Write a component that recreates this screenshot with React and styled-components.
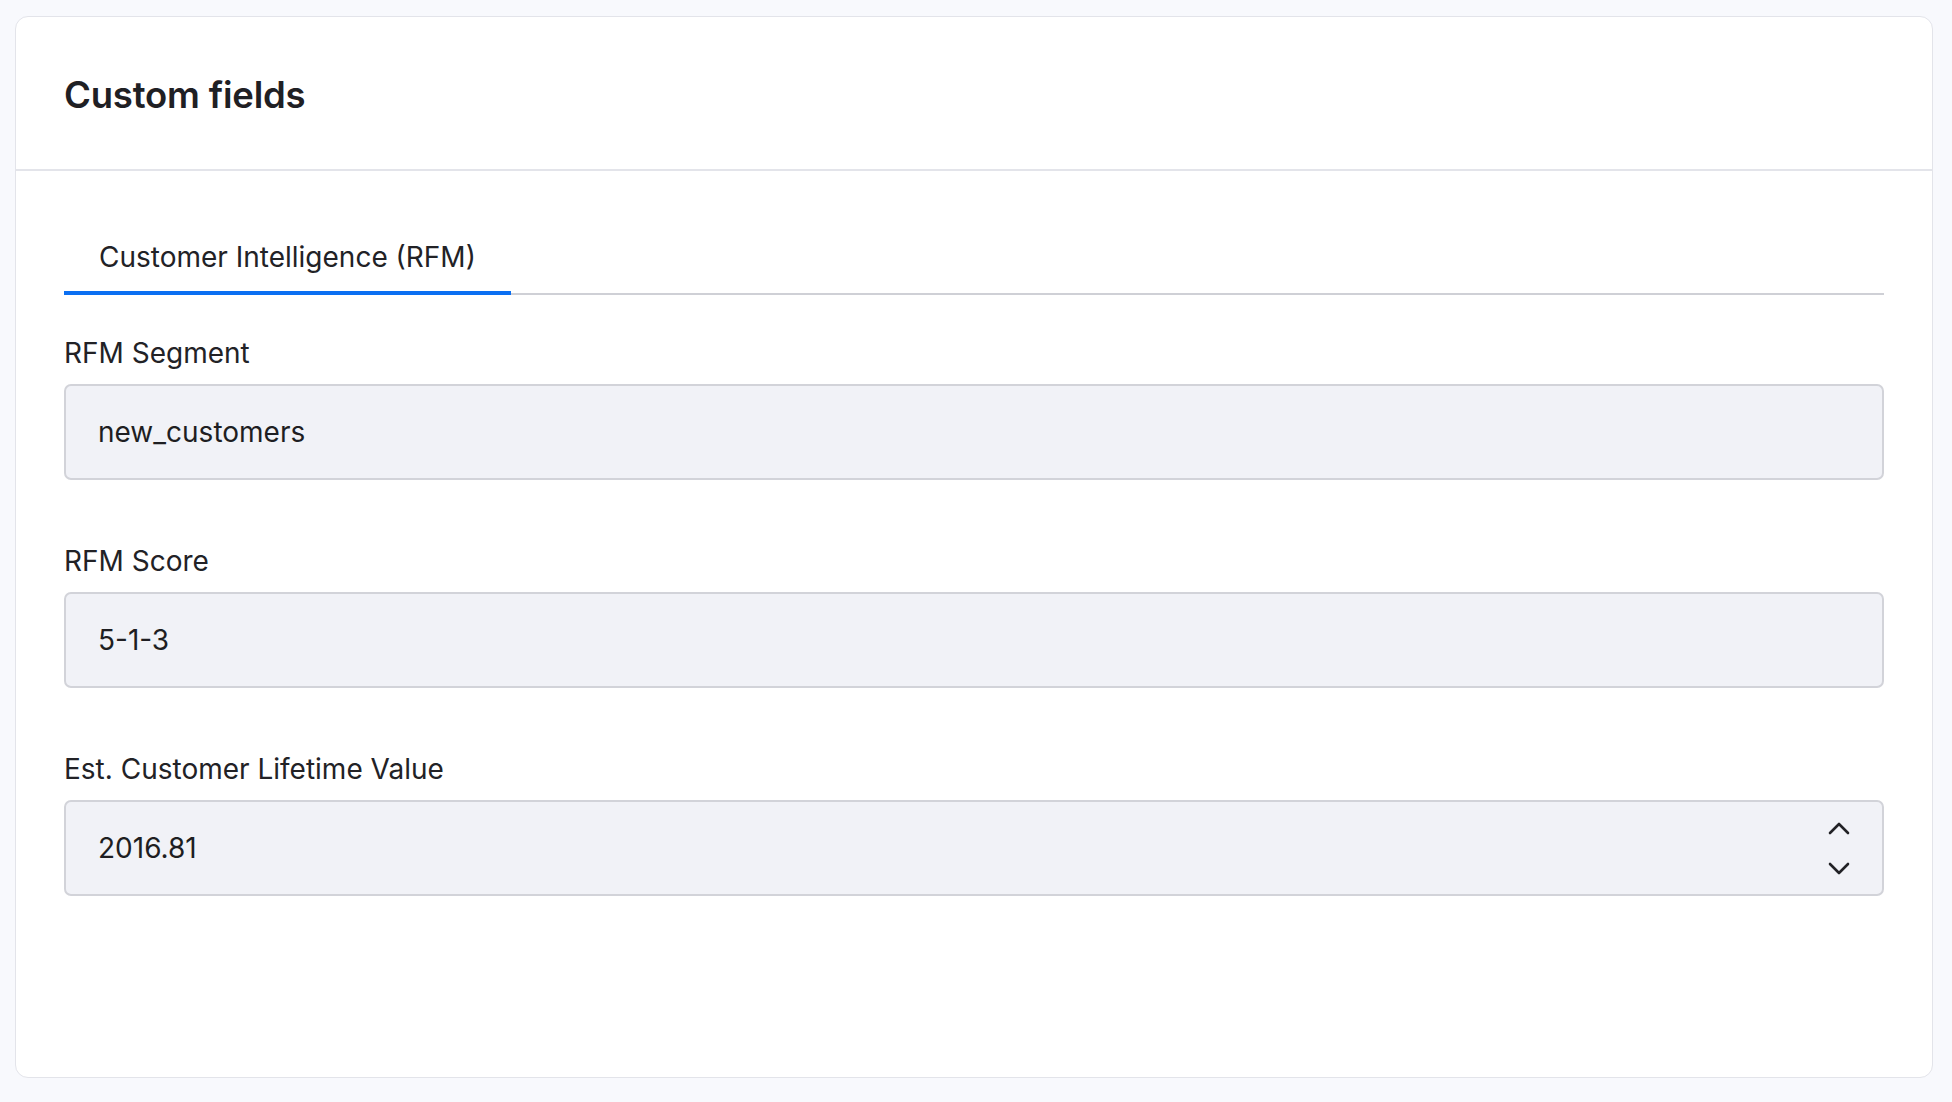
import React from "react";
import styled, { createGlobalStyle } from "styled-components";

const Global = createGlobalStyle`
  *, *::before, *::after { box-sizing: border-box; }
  html, body { margin: 0; padding: 0; }
  body {
    background: #f8f9fd;
    font-family: Inter, "Noto Sans", "Liberation Sans", sans-serif;
    color: #222226;
  }
`;

const Page = styled.div`
  padding: 16px 19px 23px 15px;
  min-height: 1102px;
`;

const Card = styled.section`
  background: #ffffff;
  border: 1px solid #e3e4ea;
  border-radius: 13px;
  display: flex;
  flex-direction: column;
`;

const CardHeader = styled.header`
  height: 154px;
  display: flex;
  align-items: center;
  padding: 4px 48px 0;
  border-bottom: 2px solid #e3e4ea;
`;

const Title = styled.h2`
  margin: 0;
  font-size: 36.5px;
  font-weight: 600;
  color: #1f2024;
  letter-spacing: -0.2px;
`;

const CardBody = styled.div`
  padding: 48px 48px 181px;
  display: flex;
  flex-direction: column;
`;

const TabList = styled.div`
  display: flex;
  border-bottom: 2px solid #cfd0d6;
  margin-bottom: 38px;
`;

const Tab = styled.button`
  appearance: none;
  background: none;
  border: none;
  border-bottom: 4px solid ${(p) => (p.$active ? "#0b6ff2" : "transparent")};
  margin-bottom: -2px;
  padding: 18px 35px 14px;
  font-family: inherit;
  font-size: 28px;
  line-height: 40px;
  color: #222226;
  cursor: pointer;
`;

const Field = styled.div`
  display: flex;
  flex-direction: column;
  gap: 11px;
  & + & {
    margin-top: 61px;
  }
`;

const Label = styled.label`
  font-size: 28px;
  line-height: 40px;
  color: #222226;
`;

const InputWrap = styled.div`
  position: relative;
  height: 96px;
  background: #f1f2f7;
  border: 2px solid #d2d3d9;
  border-radius: 7px;
  display: flex;
  align-items: center;
  padding: 0 32px;
`;

const Value = styled.input`
  flex: 1;
  border: none;
  background: transparent;
  outline: none;
  font-family: inherit;
  font-size: 28px;
  color: #1e1e22;
  padding: 0;
`;

const Spinner = styled.div`
  position: absolute;
  right: 32px;
  top: 0;
  bottom: 0;
  display: flex;
  flex-direction: column;
  justify-content: center;
  gap: 27px;
`;

const Chevron = ({ up }) => (
  <svg width="22" height="14" viewBox="0 0 22 14" fill="none">
    <path
      d={up ? "M2 12 L11 3 L20 12" : "M2 2 L11 11 L20 2"}
      stroke="#222226"
      strokeWidth="2.6"
      strokeLinecap="round"
      strokeLinejoin="round"
    />
  </svg>
);

const fields = [
  { id: "rfm-segment", label: "RFM Segment", value: "new_customers" },
  { id: "rfm-score", label: "RFM Score", value: "5-1-3" },
  { id: "clv", label: "Est. Customer Lifetime Value", value: "2016.81", number: true },
];

export default function App() {
  return (
    <>
      <Global />
      <Page>
        <Card>
          <CardHeader>
            <Title>Custom fields</Title>
          </CardHeader>
          <CardBody>
            <TabList>
              <Tab $active>Customer Intelligence (RFM)</Tab>
            </TabList>
            {fields.map((f) => (
              <Field key={f.id}>
                <Label htmlFor={f.id}>{f.label}</Label>
                <InputWrap>
                  <Value id={f.id} defaultValue={f.value} readOnly />
                  {f.number && (
                    <Spinner>
                      <Chevron up />
                      <Chevron />
                    </Spinner>
                  )}
                </InputWrap>
              </Field>
            ))}
          </CardBody>
        </Card>
      </Page>
    </>
  );
}
